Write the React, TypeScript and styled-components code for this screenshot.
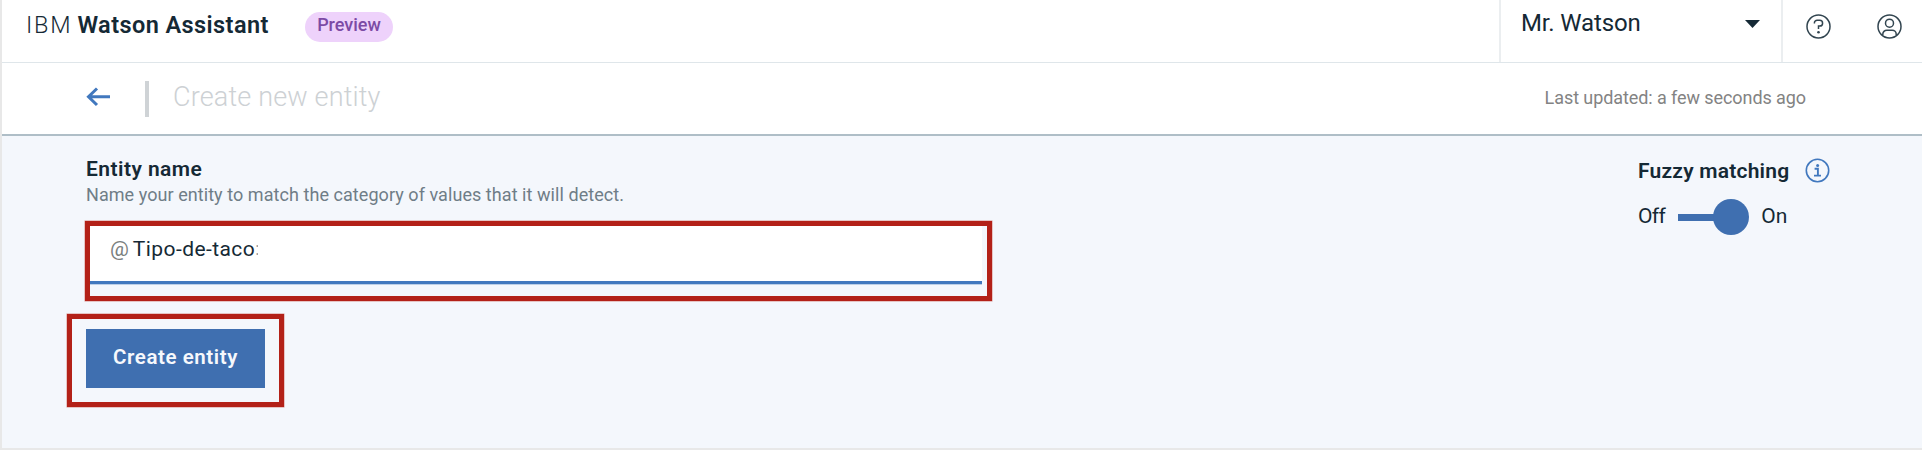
import React from 'react';
import styled, { createGlobalStyle } from 'styled-components';

const GlobalStyle = createGlobalStyle`
  * { box-sizing: border-box; }
  body { margin: 0; background: #fff; font-family: Roboto, "Liberation Sans", sans-serif; color: #152935; }
`;

const Page = styled.div`
  width: 1922px;
  height: 450px;
  display: flex;
  flex-direction: column;
  border-left: 2px solid #e8e8e8;
  border-bottom: 2px solid #e8e8e8;
  overflow: hidden;
`;

const Text = styled.span<{ $size: number; $weight?: number; $spacing?: number; $color?: string }>`
  display: block;
  font-size: ${p => p.$size}px;
  font-weight: ${p => p.$weight ?? 400};
  letter-spacing: ${p => p.$spacing ?? 0}px;
  color: ${p => p.$color ?? '#152935'};
  line-height: 26px;
  white-space: nowrap;
`;

const Header = styled.header`
  display: flex;
  flex: none;
  height: 63px;
  border-bottom: 1px solid #dfe6ea;
`;

const Brand = styled.div`
  display: flex;
  width: 303px;
  padding: 12px 0 0 24px;
`;

const Product = styled(Text)`
  margin-left: 5px;
`;

const Pill = styled.div`
  width: 88px;
  height: 30px;
  margin-top: 12px;
  border-radius: 15px;
  background: #eed2fb;
  display: flex;
  justify-content: center;
`;

const InstancePicker = styled.div`
  display: flex;
  justify-content: space-between;
  width: 284px;
  margin-left: auto;
  padding: 10px 21px 0 20px;
  border-left: 2px solid #ebeef0;
  border-right: 2px solid #ebeef0;
`;

const Caret = styled.svg`
  margin-top: 10px;
`;

const HeaderIcons = styled.div`
  display: flex;
  gap: 46px;
  width: 139px;
  padding: 14px 0 0 23px;
`;

const TitleBar = styled.div`
  display: flex;
  flex: none;
  align-items: flex-start;
  height: 73px;
  padding: 18px 116px 0 84px;
  border-bottom: 2px solid #afbec7;
`;

const BackArrow = styled.svg`
  margin-top: 6px;
`;

const Divider = styled.div`
  width: 4px;
  height: 36px;
  margin: 0 24px 0 35px;
  background: #cfd3d6;
`;

const TitleText = styled(Text)`
  margin-top: 3px;
`;

const Updated = styled(Text)`
  margin: 4px 0 0 auto;
`;

const Content = styled.main`
  display: flex;
  flex: 1;
  align-items: flex-start;
  justify-content: space-between;
  background: #f4f7fc;
`;

const Form = styled.section`
  display: flex;
  flex-direction: column;
  align-items: flex-start;
  padding: 21px 0 0 65px;
`;

const FormText = styled(Text)`
  margin-left: 19px;
  line-height: 25px;
`;

const Highlight = styled.div<{ $w: number; $h: number }>`
  width: ${p => p.$w}px;
  height: ${p => p.$h}px;
  border: 5px solid #b32118;
  box-shadow: 0 0 0 0.5px #d9908c;
`;

const FieldHighlight = styled(Highlight)`
  margin: 14px 0 0 18px;
`;

const ButtonHighlight = styled(Highlight)`
  margin-top: 13px;
  padding: 10px 0 0 14px;
`;

const Field = styled.div`
  display: flex;
  width: 892px;
  height: 58px;
  padding: 10px 0 0 20px;
  background: #fff;
  border-bottom: 3px solid #4178be;
  box-shadow: 0 1px 0 #bccfe7;
`;

const Value = styled(Text)`
  margin-left: 4px;
`;

const ClippedTail = styled(Text)`
  width: 3px;
  overflow: hidden;
`;

const CreateButton = styled.button`
  display: flex;
  justify-content: center;
  width: 179px;
  height: 59px;
  padding: 15px 0 0;
  border: 0;
  background: #3f6fb0;
  font-family: inherit;
`;

const Fuzzy = styled.aside`
  width: 284px;
  padding-top: 22px;
`;

const FuzzyHeading = styled.div`
  display: flex;
  gap: 16px;
`;

const ToggleRow = styled.div`
  display: flex;
  align-items: center;
  margin-top: 14px;
  height: 38px;
`;

const Toggle = styled.div`
  display: flex;
  align-items: center;
  width: 71px;
  margin: 0 12px 0 13px;
`;

const Track = styled.div`
  width: 36px;
  height: 7px;
  margin-right: -1px;
  background: #3f6fb0;
`;

const Knob = styled.div`
  width: 36px;
  height: 36px;
  border-radius: 50%;
  background: #3f6fb0;
`;

const ToggleLabel = styled(Text)`
  margin-top: -2px;
`;

function HelpIcon() {
  return (
    <svg width="25" height="25" viewBox="0 0 25 25" fill="none" stroke="#324550" strokeWidth="1.5">
      <circle cx="12.5" cy="12.5" r="11.5" />
      <path d="M8.4 9.6V9a2.7 2.7 0 0 1 2.7-2.7h2.6a2.9 2.9 0 0 1 0 5.8h-1.2v3" />
      <circle cx="12.5" cy="18.3" r="1.3" fill="#324550" stroke="none" />
    </svg>
  );
}

function UserIcon() {
  return (
    <svg width="25" height="25" viewBox="0 0 25 25" fill="none" stroke="#324550" strokeWidth="1.5">
      <circle cx="12.5" cy="12.5" r="11.5" />
      <circle cx="12.5" cy="9.2" r="4" />
      <path d="M5.8 21.6v-1.4a4 4 0 0 1 4-4h5.4a4 4 0 0 1 4 4v1.4" />
    </svg>
  );
}

function InfoIcon() {
  return (
    <svg width="25" height="25" viewBox="0 0 25 25" fill="none" stroke="#4178be">
      <circle cx="12.5" cy="12.5" r="11.2" strokeWidth="1.6" />
      <path d="M9.6 10.8h3.3v6.6M9 17.6h7" strokeWidth="1.9" />
      <circle cx="12.6" cy="7.4" r="1.5" fill="#4178be" stroke="none" />
    </svg>
  );
}

export default function App() {
  return (
    <Page>
      <GlobalStyle />
      <Header>
        <Brand>
          <Text $size={23.5} $weight={300} $spacing={1.8}>IBM</Text>
          <Product $size={23.5} $weight={600} $spacing={0.42}>Watson Assistant</Product>
        </Brand>
        <Pill>
          <Text $size={18} $weight={500} $color="#7c4aa5">Preview</Text>
        </Pill>
        <InstancePicker>
          <Text $size={24} $spacing={-0.15}>Mr. Watson</Text>
          <Caret width="15" height="8" viewBox="0 0 15 8"><path d="M0 0h15L7.5 8z" fill="#152935" /></Caret>
        </InstancePicker>
        <HeaderIcons>
          <HelpIcon />
          <UserIcon />
        </HeaderIcons>
      </Header>
      <TitleBar>
        <BackArrow width="24" height="20" viewBox="0 0 24 20" fill="none" stroke="#4178be" strokeWidth="3">
          <path d="M24 9.7H3M11 1.5L2.5 9.7 11 18" />
        </BackArrow>
        <Divider />
        <TitleText $size={27} $weight={300} $spacing={0.16} $color="#cdd1d4">Create new entity</TitleText>
        <Updated $size={18} $spacing={-0.08} $color="#838383">Last updated: a few seconds ago</Updated>
      </TitleBar>
      <Content>
        <Form>
          <FormText $size={21} $weight={600} $spacing={0.45}>Entity name</FormText>
          <FormText $size={18} $spacing={0.06} $color="#6f7d87">Name your entity to match the category of values that it will detect.</FormText>
          <FieldHighlight $w={907} $h={80}>
            <Field>
              <Text $size={21} $color="#7a807e">@</Text>
              <Value $size={21} $spacing={0.42}>Tipo-de-taco</Value>
              <ClippedTail $size={18} $color="#9a9fa2">:</ClippedTail>
            </Field>
          </FieldHighlight>
          <ButtonHighlight $w={217} $h={93}>
            <CreateButton>
              <Text $size={20.5} $weight={600} $spacing={0.57} $color="#f6f8fc">Create entity</Text>
            </CreateButton>
          </ButtonHighlight>
        </Form>
        <Fuzzy>
          <FuzzyHeading>
            <Text $size={21} $weight={600} $spacing={0.22}>Fuzzy matching</Text>
            <InfoIcon />
          </FuzzyHeading>
          <ToggleRow>
            <ToggleLabel $size={21} $spacing={-0.6}>Off</ToggleLabel>
            <Toggle>
              <Track />
              <Knob />
            </Toggle>
            <ToggleLabel $size={21}>On</ToggleLabel>
          </ToggleRow>
        </Fuzzy>
      </Content>
    </Page>
  );
}
